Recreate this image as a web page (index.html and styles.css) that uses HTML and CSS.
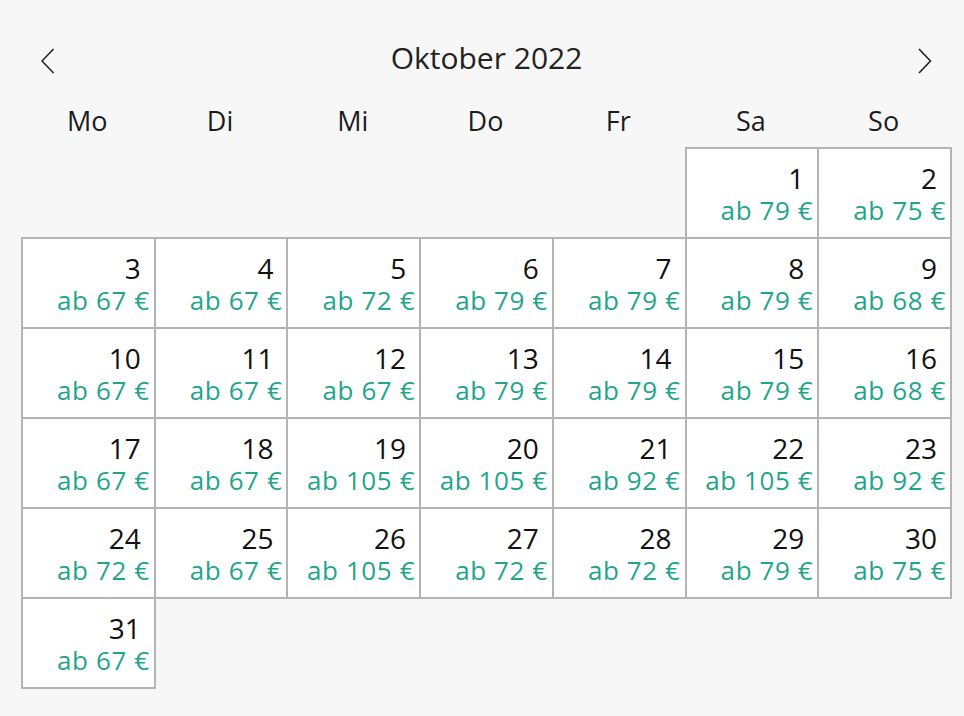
FILE: index.html
```html
<!DOCTYPE html>
<html lang="de">
<head>
<meta charset="utf-8">
<title>Oktober 2022</title>
<link rel="stylesheet" href="styles.css">
</head>
<body>
<div class="cal">
  <div class="head">
    <button class="nav" aria-label="Vorheriger Monat">
      <svg width="14" height="26" viewBox="0 0 14 26"><path d="M12.5 1 L1 13 L12.5 25" fill="none" stroke="#222" stroke-width="1.6"/></svg>
    </button>
    <h2 class="title">Oktober 2022</h2>
    <button class="nav" aria-label="Nächster Monat">
      <svg width="14" height="26" viewBox="0 0 14 26"><path d="M1 1 L12.5 13 L1 25" fill="none" stroke="#222" stroke-width="1.6"/></svg>
    </button>
  </div>
  <div class="weekdays">
    <span>Mo</span><span>Di</span><span>Mi</span><span>Do</span><span>Fr</span><span>Sa</span><span>So</span>
  </div>
  <div class="grid">
    <div class="blank"></div><div class="blank"></div><div class="blank"></div><div class="blank"></div><div class="blank"></div>
    <div class="day"><span class="num">1</span><span class="price">ab 79 €</span></div>
    <div class="day"><span class="num">2</span><span class="price">ab 75 €</span></div>
    <div class="day"><span class="num">3</span><span class="price">ab 67 €</span></div>
    <div class="day"><span class="num">4</span><span class="price">ab 67 €</span></div>
    <div class="day"><span class="num">5</span><span class="price">ab 72 €</span></div>
    <div class="day"><span class="num">6</span><span class="price">ab 79 €</span></div>
    <div class="day"><span class="num">7</span><span class="price">ab 79 €</span></div>
    <div class="day"><span class="num">8</span><span class="price">ab 79 €</span></div>
    <div class="day"><span class="num">9</span><span class="price">ab 68 €</span></div>
    <div class="day"><span class="num">10</span><span class="price">ab 67 €</span></div>
    <div class="day"><span class="num">11</span><span class="price">ab 67 €</span></div>
    <div class="day"><span class="num">12</span><span class="price">ab 67 €</span></div>
    <div class="day"><span class="num">13</span><span class="price">ab 79 €</span></div>
    <div class="day"><span class="num">14</span><span class="price">ab 79 €</span></div>
    <div class="day"><span class="num">15</span><span class="price">ab 79 €</span></div>
    <div class="day"><span class="num">16</span><span class="price">ab 68 €</span></div>
    <div class="day"><span class="num">17</span><span class="price">ab 67 €</span></div>
    <div class="day"><span class="num">18</span><span class="price">ab 67 €</span></div>
    <div class="day"><span class="num">19</span><span class="price">ab 105 €</span></div>
    <div class="day"><span class="num">20</span><span class="price">ab 105 €</span></div>
    <div class="day"><span class="num">21</span><span class="price">ab 92 €</span></div>
    <div class="day"><span class="num">22</span><span class="price">ab 105 €</span></div>
    <div class="day"><span class="num">23</span><span class="price">ab 92 €</span></div>
    <div class="day"><span class="num">24</span><span class="price">ab 72 €</span></div>
    <div class="day"><span class="num">25</span><span class="price">ab 67 €</span></div>
    <div class="day"><span class="num">26</span><span class="price">ab 105 €</span></div>
    <div class="day"><span class="num">27</span><span class="price">ab 72 €</span></div>
    <div class="day"><span class="num">28</span><span class="price">ab 72 €</span></div>
    <div class="day"><span class="num">29</span><span class="price">ab 79 €</span></div>
    <div class="day"><span class="num">30</span><span class="price">ab 75 €</span></div>
    <div class="day"><span class="num">31</span><span class="price">ab 67 €</span></div>
  </div>
</div>
</body>
</html>
```
FILE: styles.css
```css
html, body {
  margin: 0;
  padding: 0;
  background: #f7f7f7;
}
body {
  font-family: "Open Sans", "Liberation Sans", sans-serif;
  color: #1c1c1c;
}
.cal {
  width: 929px;
  margin-left: 21px;
  padding-bottom: 20px;
}
.head {
  display: flex;
  align-items: flex-start;
  justify-content: space-between;
  height: 103px;
  padding: 0 18px 0 20px;
  box-sizing: border-box;
}
.nav {
  background: none;
  border: 0;
  padding: 0;
  margin-top: 48px;
  width: 14px;
  height: 26px;
  cursor: pointer;
}
.nav svg { display: block; }
.title {
  margin: 38px 0 0;
  font-size: 30px;
  font-weight: 400;
  line-height: 40px;
  color: #222;
}
.weekdays {
  display: grid;
  grid-template-columns: repeat(7, 1fr);
  text-align: center;
  font-size: 27px;
  line-height: 36px;
  height: 36px;
  margin-bottom: 8px;
  color: #1c1c1c;
}
.grid {
  display: grid;
  grid-template-columns: repeat(7, 1fr);
  grid-auto-rows: 90px;
}
.day {
  width: calc(100% + 2px);
  height: 92px;
  box-sizing: border-box;
  border: 2px solid #b4b4b4;
  background: #fff;
  display: flex;
  flex-direction: column;
  align-items: flex-end;
  padding: 13px 4px 0 0;
}
.num {
  font-size: 28px;
  line-height: 32px;
  margin-right: 9px;
  color: #111;
}
.price {
  font-size: 26px;
  line-height: 32px;
  letter-spacing: 0.6px;
  color: #1fa58b;
  white-space: nowrap;
}
```
